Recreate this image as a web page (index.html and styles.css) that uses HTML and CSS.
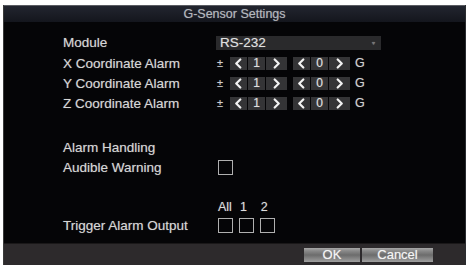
FILE: index.html
```html
<!DOCTYPE html>
<html>
<head>
<meta charset="utf-8">
<link rel="stylesheet" href="styles.css">
</head>
<body>
<div class="dialog">
  <div class="title">G-Sensor Settings</div>
  <div class="content">
    <div class="row row-module">
      <div class="label">Module</div>
      <div class="select"><span>RS-232</span><span class="caret">▾</span></div>
    </div>
    <div class="row">
      <div class="label">X Coordinate Alarm</div>
      <div class="ctrl">
        <span class="pm">±</span>
        <div class="spin"><span class="seg arrow"><svg viewBox="0 0 10 12"><path d="M7 1.5 L2.5 6 L7 10.5"/></svg></span><span class="seg val">1</span><span class="seg arrow wide"><svg viewBox="0 0 10 12"><path d="M3 1.5 L7.5 6 L3 10.5"/></svg></span></div>
        <div class="spin"><span class="seg arrow"><svg viewBox="0 0 10 12"><path d="M7 1.5 L2.5 6 L7 10.5"/></svg></span><span class="seg val">0</span><span class="seg arrow wide"><svg viewBox="0 0 10 12"><path d="M3 1.5 L7.5 6 L3 10.5"/></svg></span></div>
        <span class="unit">G</span>
      </div>
    </div>
    <div class="row">
      <div class="label">Y Coordinate Alarm</div>
      <div class="ctrl">
        <span class="pm">±</span>
        <div class="spin"><span class="seg arrow"><svg viewBox="0 0 10 12"><path d="M7 1.5 L2.5 6 L7 10.5"/></svg></span><span class="seg val">1</span><span class="seg arrow wide"><svg viewBox="0 0 10 12"><path d="M3 1.5 L7.5 6 L3 10.5"/></svg></span></div>
        <div class="spin"><span class="seg arrow"><svg viewBox="0 0 10 12"><path d="M7 1.5 L2.5 6 L7 10.5"/></svg></span><span class="seg val">0</span><span class="seg arrow wide"><svg viewBox="0 0 10 12"><path d="M3 1.5 L7.5 6 L3 10.5"/></svg></span></div>
        <span class="unit">G</span>
      </div>
    </div>
    <div class="row">
      <div class="label">Z Coordinate Alarm</div>
      <div class="ctrl">
        <span class="pm">±</span>
        <div class="spin"><span class="seg arrow"><svg viewBox="0 0 10 12"><path d="M7 1.5 L2.5 6 L7 10.5"/></svg></span><span class="seg val">1</span><span class="seg arrow wide"><svg viewBox="0 0 10 12"><path d="M3 1.5 L7.5 6 L3 10.5"/></svg></span></div>
        <div class="spin"><span class="seg arrow"><svg viewBox="0 0 10 12"><path d="M7 1.5 L2.5 6 L7 10.5"/></svg></span><span class="seg val">0</span><span class="seg arrow wide"><svg viewBox="0 0 10 12"><path d="M3 1.5 L7.5 6 L3 10.5"/></svg></span></div>
        <span class="unit">G</span>
      </div>
    </div>
    <div class="row row-alarm">
      <div class="label">Alarm Handling</div>
    </div>
    <div class="row row-audible">
      <div class="label">Audible Warning</div>
      <div class="ctrl"><span class="check"></span></div>
    </div>
    <div class="row row-heads">
      <div class="label"></div>
      <div class="ctrl heads"><span class="h-all">All</span><span class="h-1">1</span><span class="h-2">2</span></div>
    </div>
    <div class="row row-trigger">
      <div class="label">Trigger Alarm Output</div>
      <div class="ctrl checks"><span class="check"></span><span class="check"></span><span class="check"></span></div>
    </div>
  </div>
  <div class="footer">
    <div class="btn ok">OK</div>
    <div class="btn cancel">Cancel</div>
  </div>
</div>
</body>
</html>
```

FILE: styles.css
```css
html, body {
  margin: 0;
  padding: 0;
  background: #ffffff;
}
body {
  width: 470px;
  height: 268px;
  overflow: hidden;
  font-family: "Liberation Sans", Arial, sans-serif;
}
.dialog {
  margin: 5px 4px 3px 3px;
  height: 260px;
  background: #050507;
  display: flex;
  flex-direction: column;
  border-left: 1px solid #3a3a3a;
  border-right: 1px solid #2a2c30;
  box-sizing: border-box;
}
.title {
  height: 17px;
  line-height: 17px;
  text-align: center;
  font-size: 12.5px;
  color: #b4b7bd;
  background: linear-gradient(#22252f, #14161d);
  border-top: 1px solid #5a5c62;
  box-sizing: border-box;
  text-shadow: 0 0 1px rgba(200, 200, 210, 0.5);
}
.content {
  flex: 1;
  padding-top: 10px;
  padding-left: 59px;
  color: #d6d6d6;
  font-size: 13.5px;
  text-shadow: 0 0 1px rgba(230, 230, 230, 0.45);
}
.row {
  display: flex;
  align-items: center;
  height: 20px;
}
.row-module { height: 21px; }
.row-alarm { margin-top: 24px; }
.row-audible { height: 21px; }
.row-heads { margin-top: 21px; height: 16px; }
.label {
  width: 153px;
  flex: none;
}
.select {
  width: 165px;
  height: 14px;
  background: #2a2a2c;
  color: #e0e0e0;
  font-size: 13.5px;
  display: flex;
  align-items: center;
  justify-content: space-between;
  padding: 0 6px 0 4px;
  box-sizing: border-box;
}
.caret {
  font-size: 6px;
  color: #777;
}
.ctrl {
  display: flex;
  align-items: center;
}
.pm {
  width: 13px;
  font-size: 11px;
  color: #cfcfcf;
  padding-left: 1px;
}
.spin {
  display: flex;
  height: 13px;
  margin-right: 6px;
}
.seg {
  background: #343436;
  height: 13px;
  display: flex;
  align-items: center;
  justify-content: center;
  margin-right: 1px;
  color: #e0e0e0;
  font-size: 12px;
}
.seg.arrow { width: 17px; }
.seg.arrow.wide { width: 21px; margin-right: 0; }
.seg.val { width: 17px; }
.seg svg {
  width: 9px;
  height: 11px;
}
.seg svg path {
  fill: none;
  stroke: #f2f2f2;
  stroke-width: 2.4;
  stroke-linecap: round;
  stroke-linejoin: round;
}
.unit {
  font-size: 12.5px;
  color: #d0d0d0;
  margin-left: -1px;
}
.check {
  width: 15px;
  height: 15px;
  border: 1.5px solid #b0b0b0;
  box-sizing: border-box;
  display: inline-block;
  margin-left: 2px;
}
.checks .check + .check { margin-left: 6px; }
.heads {
  font-size: 12.5px;
  color: #dcdcdc;
  width: 70px;
  height: 16px;
}
.heads span { display: inline-block; }
.h-all { margin-left: 2px; }
.h-1 { margin-left: 8px; }
.h-2 { margin-left: 14px; }
.footer {
  height: 22px;
  background: #2d2a2c;
  display: flex;
  align-items: center;
  justify-content: flex-end;
  padding-right: 32px;
  border-top: 1px solid #1a1819;
  box-sizing: border-box;
}
.btn {
  height: 14px;
  line-height: 14px;
  font-size: 13px;
  color: #f4f4f4;
  text-align: center;
  text-shadow: 0 0 1px rgba(255, 255, 255, 0.5);
  background: linear-gradient(#a8a8a8 0%, #8a8a8a 20%, #6c6c6c 50%, #8a8a8a 80%, #a0a0a0 100%);
}
.ok { width: 56px; margin-right: 2px; }
.cancel { width: 71px; }
```
